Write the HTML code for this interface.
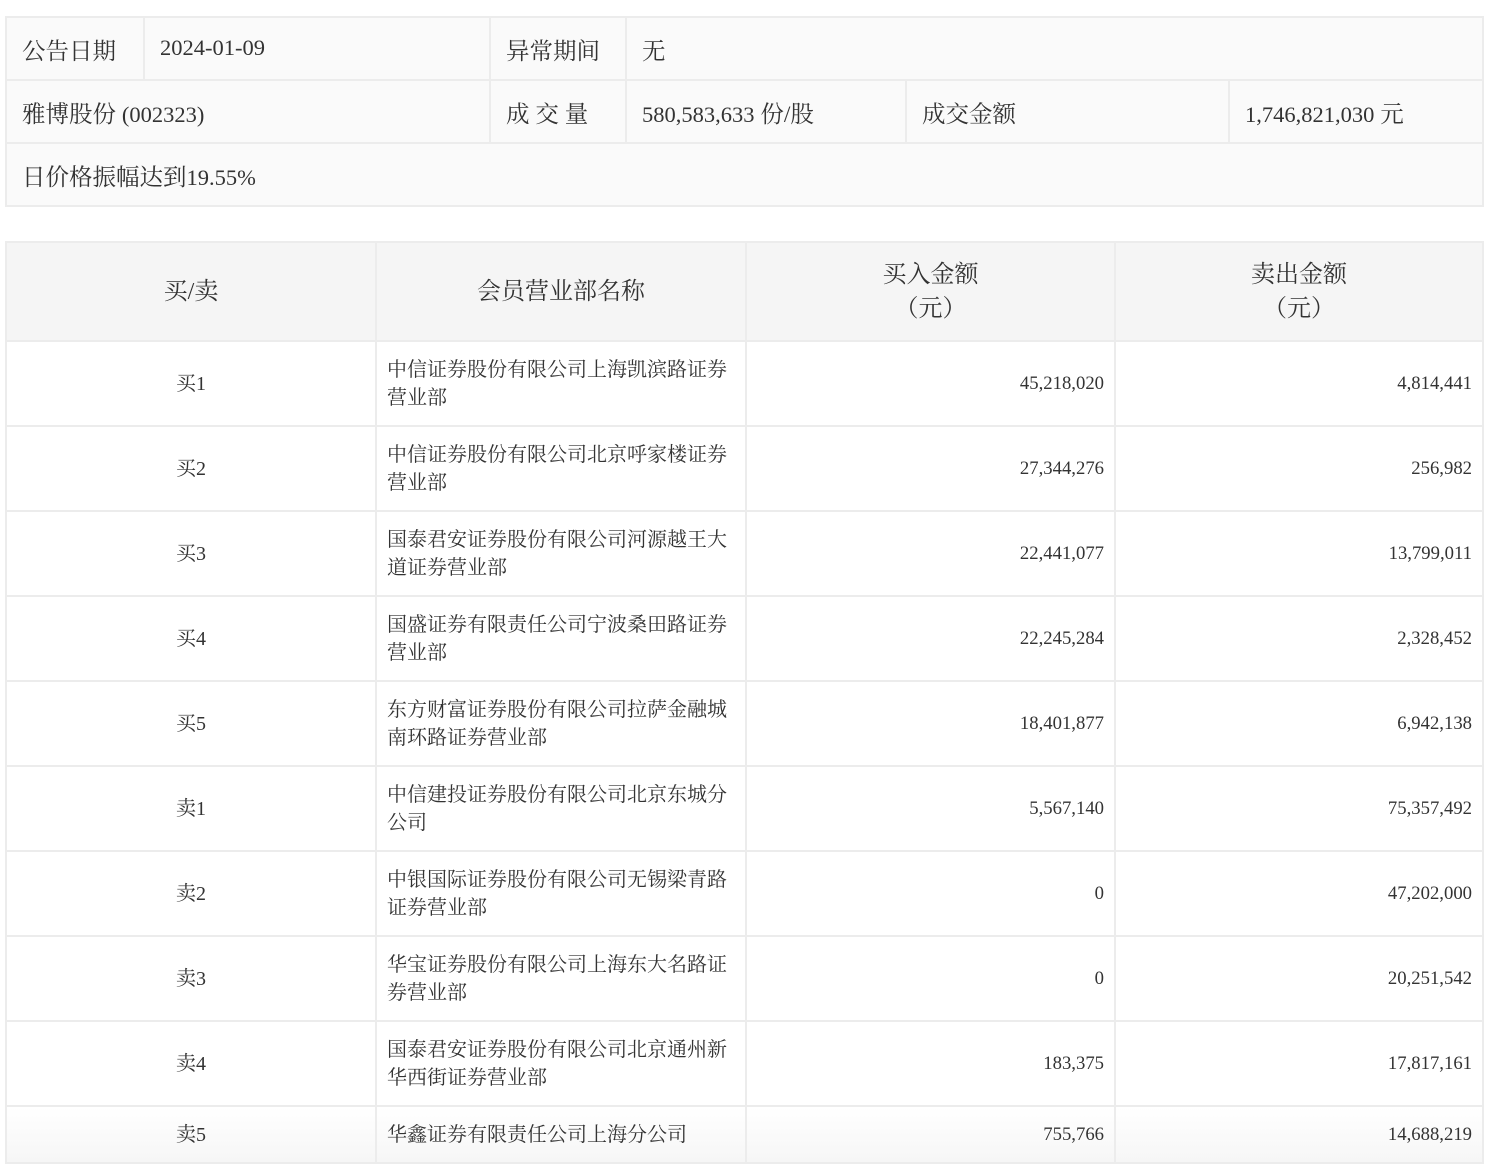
<!DOCTYPE html><html><head><meta charset="utf-8"><style>
body{margin:0;background:#fff;font-family:"Liberation Serif","Noto Serif CJK SC",serif;color:#333;width:1496px;height:1172px;overflow:hidden;position:relative}
table{border-collapse:collapse;position:absolute;left:5px;table-layout:fixed}
td{border:2px solid #ececec;padding:0}
#t1{top:16px;width:1479px;font-size:23.5px;background:#fafafa}
#t1 td{height:61px;padding-left:15px}
#t1 .n{font-size:22.5px}
#t2{top:241px;width:1479px;font-size:20px}
#t2 th{background:#f5f5f5;border:2px solid #ececec;font-weight:normal;font-size:24px;height:95px;line-height:34px}
#t2 td{height:83px;line-height:28px}
#t2 tr.last td{height:55px;background:linear-gradient(#fff,#f6f6f6)}
.c{text-align:center}.r{text-align:right;padding-right:10px;font-size:18.7px}.l{padding-left:10px}
</style></head><body>
<table id="t1"><col style="width:138px"><col style="width:346px"><col style="width:136px"><col style="width:280px"><col style="width:323px"><col>
<tr><td>公告日期</td><td><span class="n">2024-01-09</span></td><td>异常期间</td><td colspan="3">无</td></tr>
<tr><td colspan="2">雅博股份 <span class="n">(002323)</span></td><td>成 交 量</td><td><span class="n">580,583,633</span> 份/股</td><td>成交金额</td><td><span class="n">1,746,821,030</span> 元</td></tr>
<tr><td colspan="6">日价格振幅达到<span class="n">19.55%</span></td></tr>
</table>
<table id="t2"><col style="width:370px"><col style="width:370px"><col style="width:369px"><col>
<tr><th>买/卖</th><th>会员营业部名称</th><th>买入金额<br>（元）</th><th>卖出金额<br>（元）</th></tr>
<tr><td class="c">买1</td><td class="l">中信证券股份有限公司上海凯滨路证券<br>营业部</td><td class="r">45,218,020</td><td class="r">4,814,441</td></tr>
<tr><td class="c">买2</td><td class="l">中信证券股份有限公司北京呼家楼证券<br>营业部</td><td class="r">27,344,276</td><td class="r">256,982</td></tr>
<tr><td class="c">买3</td><td class="l">国泰君安证券股份有限公司河源越王大<br>道证券营业部</td><td class="r">22,441,077</td><td class="r">13,799,011</td></tr>
<tr><td class="c">买4</td><td class="l">国盛证券有限责任公司宁波桑田路证券<br>营业部</td><td class="r">22,245,284</td><td class="r">2,328,452</td></tr>
<tr><td class="c">买5</td><td class="l">东方财富证券股份有限公司拉萨金融城<br>南环路证券营业部</td><td class="r">18,401,877</td><td class="r">6,942,138</td></tr>
<tr><td class="c">卖1</td><td class="l">中信建投证券股份有限公司北京东城分<br>公司</td><td class="r">5,567,140</td><td class="r">75,357,492</td></tr>
<tr><td class="c">卖2</td><td class="l">中银国际证券股份有限公司无锡梁青路<br>证券营业部</td><td class="r">0</td><td class="r">47,202,000</td></tr>
<tr><td class="c">卖3</td><td class="l">华宝证券股份有限公司上海东大名路证<br>券营业部</td><td class="r">0</td><td class="r">20,251,542</td></tr>
<tr><td class="c">卖4</td><td class="l">国泰君安证券股份有限公司北京通州新<br>华西街证券营业部</td><td class="r">183,375</td><td class="r">17,817,161</td></tr>
<tr class="last"><td class="c">卖5</td><td class="l">华鑫证券有限责任公司上海分公司</td><td class="r">755,766</td><td class="r">14,688,219</td></tr>
</table>
</body></html>
